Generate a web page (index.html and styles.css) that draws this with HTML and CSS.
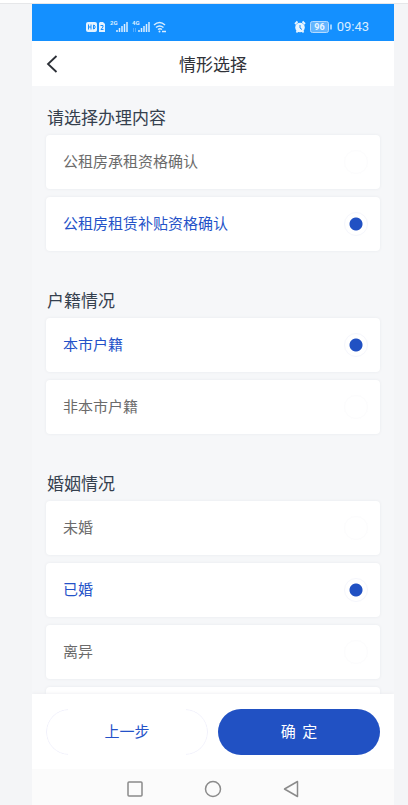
FILE: index.html
```html
<!DOCTYPE html>
<html lang="zh-CN">
<head>
<meta charset="utf-8">
<meta name="viewport" content="width=device-width, initial-scale=1">
<title>情形选择</title>
<link rel="stylesheet" href="styles.css">
</head>
<body>
<div class="phone">
  <div class="status">
    <svg class="status-left" width="82" height="16" viewBox="0 0 82 16" aria-hidden="true">
      <rect x="0" y="4" width="11" height="10" rx="2" fill="#e3f2ff"/>
      <path d="M2.500 6.500v5M5 6.500v5M2.500 9H5M7.500 7v4h.500l1-1V8L8 7z" fill="none" stroke="#1890ff"/>
      <path d="M14 4h3l2 2v8h-6V5z" fill="#e3f2ff"/>
      <path d="M14.500 7.500h2.500v1.500l-2 2.500h2.500" fill="none" stroke="#1890ff"/>
      <text x="24" y="7" class="net">2G</text>
      <path d="M31 14v-2M33.500 14v-4M36 14V8M38.500 14V6M41 14V4" stroke="#d9edff" stroke-width="1.500"/>
      <text x="46" y="7" class="net">4G</text>
      <path d="M47.500 10v4M49.500 10v4" stroke="#6fb9ff" stroke-width=".7"/>
      <path d="M53 14v-2M55.500 14v-4M58 14V8M60.500 14V6M63 14V4" stroke="#d9edff" stroke-width="1.500"/>
      <path d="M68 7q5.500-5 11 0M70 9.500q3.500-3 7.500 0M72 11.500q2-1.500 4 0" fill="none" stroke="#d9edff" stroke-width="1.500"/>
      <circle cx="73.500" cy="13.500" r="1" fill="#d9edff"/>
      <path d="M76 13.500h4" stroke="#d9edff" stroke-width="1.500"/>
    </svg>
    <div class="status-right">
      <svg width="40" height="14" viewBox="0 0 40 14" aria-hidden="true">
        <circle cx="6" cy="7.500" r="4.800" fill="#e9f5ff"/>
        <path d="M1 4l2.500-2.500M11 4L8.500 1.500M2.500 12.500l1-1.500M9.500 12.500l-1-1.500" stroke="#e9f5ff" stroke-width="1.800"/>
        <path d="M6 5v3l2 1.500" fill="none" stroke="#1890ff"/>
        <rect x="16.500" y="1.500" width="18" height="11" rx="2" fill="#63b5ff" stroke="#b4dbff"/>
        <path d="M37 4.500v5" stroke="#cfe8ff" stroke-width="1.500"/>
        <text x="25.500" y="10" class="battery">96</text>
      </svg>
      <span class="time">09:43</span>
    </div>
  </div>

  <header class="header">
    <a class="back" href="#" aria-label="返回">
      <svg width="12" height="18" viewBox="0 0 12 18" aria-hidden="true"><path d="M10.500 1L2 9l8.500 8" fill="none" stroke="#2b2f36" stroke-width="1.800"/></svg>
    </a>
    <h1 class="title">情形选择</h1>
  </header>

  <main class="content">
    <fieldset class="group">
      <legend class="legend">请选择办理内容</legend>
      <label class="option"><span>公租房承租资格确认</span><input type="radio" name="item"></label>
      <label class="option"><span>公租房租赁补贴资格确认</span><input type="radio" name="item" checked></label>
    </fieldset>
    <fieldset class="group">
      <legend class="legend">户籍情况</legend>
      <label class="option"><span>本市户籍</span><input type="radio" name="residence" checked></label>
      <label class="option"><span>非本市户籍</span><input type="radio" name="residence"></label>
    </fieldset>
    <fieldset class="group">
      <legend class="legend">婚姻情况</legend>
      <label class="option"><span>未婚</span><input type="radio" name="marriage"></label>
      <label class="option"><span>已婚</span><input type="radio" name="marriage" checked></label>
      <label class="option"><span>离异</span><input type="radio" name="marriage"></label>
      <div class="option"></div>
    </fieldset>
  </main>

  <footer class="actions">
    <button class="btn prev" type="button">上一步</button>
    <button class="btn confirm" type="button">确&nbsp; 定</button>
  </footer>

  <nav class="sysnav">
    <svg width="16" height="16" viewBox="0 0 16 16" aria-hidden="true"><rect x="1" y="1" width="14" height="14" rx="1"/></svg>
    <svg width="18" height="18" viewBox="0 0 18 18" aria-hidden="true"><circle cx="9" cy="9" r="7.500"/></svg>
    <svg width="16" height="18" viewBox="0 0 16 18" aria-hidden="true"><path d="M14.500 1.500v15L1.500 9z" stroke-linejoin="round"/></svg>
  </nav>
</div>
</body>
</html>
```
FILE: styles.css
```css
* {
  box-sizing: border-box;
}

body {
  margin: 0;
  height: 100vh;
  padding: 4px 14px 0 32px;
  display: flex;
  background: linear-gradient(#fff 3px, #e6e7e9 3px, #e6e7e9 4px, #f4f5f7 4px);
  font-family: "Noto Sans CJK SC", sans-serif;
}

.phone {
  flex: 1;
  min-width: 0;
  display: flex;
  flex-direction: column;
  background: #f6f7f9;
}

.status {
  height: 37px;
  flex: none;
  display: flex;
  align-items: center;
  justify-content: space-between;
  padding: 8px 25px 0 54px;
  background: #1490ff;
}

.status-right {
  display: flex;
  align-items: center;
  gap: 3px;
}

.status-left {
  margin-bottom: 2px;
}

.time {
  font: 13px/16px Roboto, sans-serif;
  color: #d9edff;
}

.net {
  font: bold 6px Roboto, sans-serif;
  fill: #d9edff;
}

.battery {
  font: bold 9px Roboto, sans-serif;
  fill: #e9f5ff;
  text-anchor: middle;
}

.header {
  height: 45px;
  flex: none;
  display: grid;
  grid-template-columns: 40px 1fr 40px;
  align-items: center;
  background: #fff;
}

.back {
  display: flex;
  padding-left: 14px;
}

.title {
  margin: 0;
  font-size: 17px;
  line-height: 24px;
  font-weight: 400;
  text-align: center;
  color: #303238;
}

.content {
  flex: 1;
  min-height: 0;
  overflow: hidden;
  padding: 19px 14px 0;
}

.group {
  margin: 0 0 37px;
  padding: 0;
  border: 0;
  min-width: 0;
}

.legend {
  padding: 0 1px;
  margin-bottom: 6px;
  font-size: 17px;
  line-height: 24px;
  font-weight: 400;
  color: #35404e;
}

.option {
  height: 54px;
  margin-bottom: 8px;
  padding: 0 12px 0 17px;
  display: flex;
  align-items: center;
  justify-content: space-between;
  border-radius: 4px;
  background: #fff;
  box-shadow: 0 0 3px #e6e9ed;
  font-size: 15px;
  line-height: 22px;
  color: #6b6b6b;
}

.option span {
  padding-bottom: 2px;
}

.option:last-child {
  margin-bottom: 0;
}

.option:has(input:checked) {
  color: #2452c8;
}

.option input {
  appearance: none;
  width: 24px;
  height: 24px;
  margin: 0;
  border: 1px solid #fcfcfd;
  border-radius: 50%;
}

.option input:checked {
  border-color: #f5f6fc;
  background: radial-gradient(circle, #2151c3 6px, transparent 7px);
}

.actions {
  flex: none;
  display: grid;
  grid-template-columns: 1fr 1fr;
  gap: 10px;
  padding: 15px 14px 14px;
  background: #fff;
  box-shadow: 0 0 4px #e8eaed;
  clip-path: inset(-6px 0 0);
}

.btn {
  position: relative;
  height: 46px;
  padding: 0 0 2px;
  border: 0;
  border-radius: 23px;
  font: 15px/22px "Noto Sans CJK SC", sans-serif;
}

.prev {
  background: #fff;
  color: #2452c8;
}

.prev::before {
  content: "";
  position: absolute;
  inset: 0;
  border: 1px solid #f0f0fb;
  border-radius: 23px;
  mask-image: linear-gradient(90deg, #000 22px, transparent 22px calc(100% - 22px), #000 calc(100% - 22px));
}

.confirm {
  background: #2151c3;
  color: #fff;
}

.sysnav {
  height: 36px;
  flex: none;
  display: flex;
  align-items: center;
  justify-content: center;
  gap: 61px;
  padding-top: 3px;
  background: #fbfbfb;
}

.sysnav svg {
  fill: none;
  stroke: #8b8b8b;
  stroke-width: 1.5px;
}
```
